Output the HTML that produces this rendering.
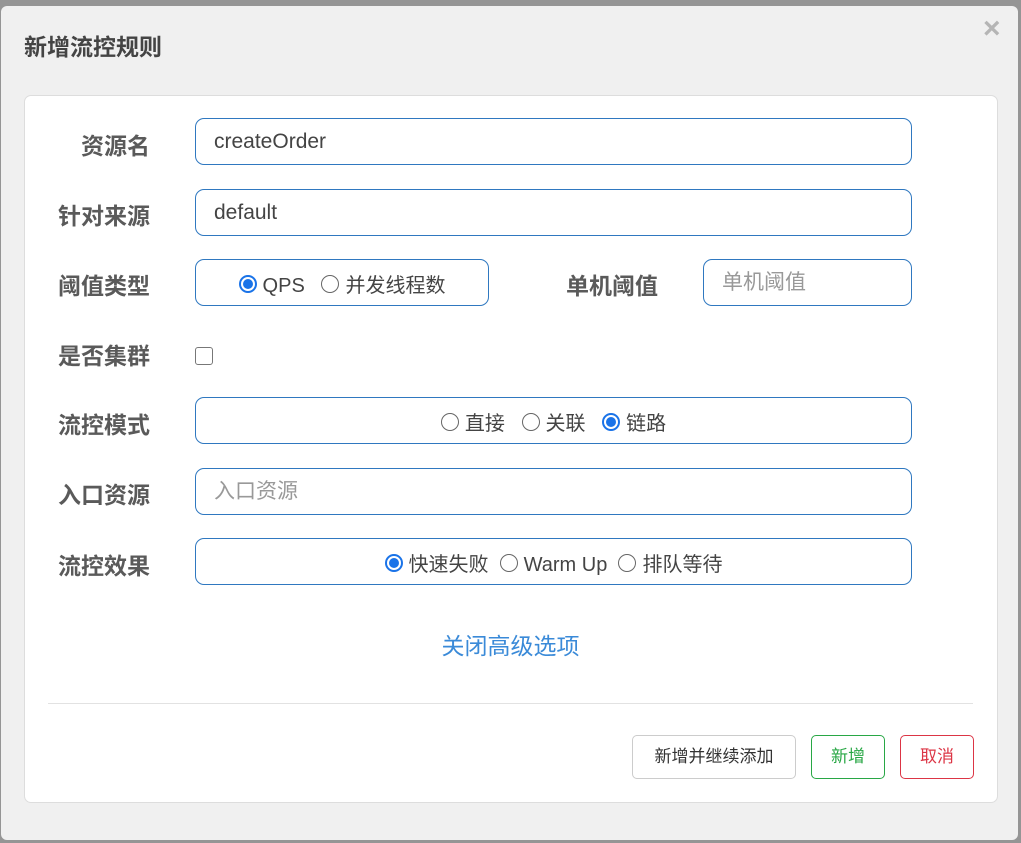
<!DOCTYPE html>
<html><head><meta charset="utf-8"><style>
*{box-sizing:border-box;margin:0;padding:0}
body{width:1021px;height:843px;background:#959595;position:relative;overflow:hidden;font-family:"Liberation Sans","Noto Sans CJK SC",sans-serif}
.dlg{position:absolute;left:1px;top:6px;width:1017px;height:834px;background:#f0f0f0;border-radius:6px}
.title{position:absolute;left:24px;top:28px;font-size:23px;font-weight:bold;color:#444}
.close{position:absolute;left:983px;top:14px;font-size:30px;font-weight:bold;color:#b5b5b5;line-height:30px}
.card{position:absolute;left:24px;top:95px;width:974px;height:708px;background:#fff;border:1px solid #ddd;border-radius:7px}
.lbl{position:absolute;font-size:23px;font-weight:bold;color:#5a5a5a;text-align:right;width:150px;left:0}
.box{position:absolute;border:1px solid #2f78c0;border-radius:9px;font-size:21px;color:#444;height:47px;line-height:45px;padding-left:18px}
.ph{color:#999}
.rad{display:inline-block;width:18px;height:18px;border:1.5px solid #666;border-radius:50%;vertical-align:-1px;margin-right:6px;position:relative}
.rad.on{border:2px solid #1a73e8}
.rad.on::after{content:"";position:absolute;left:2px;top:2px;width:10px;height:10px;border-radius:50%;background:#1a73e8}
.c{text-align:center;padding-left:0;line-height:52px;font-size:20px}
.btn{position:absolute;top:735px;height:44px;line-height:42px;border-radius:5px;font-size:17px;text-align:center;background:#fff}
</style></head><body>
<div class="dlg"></div>
<div class="title">新增流控规则</div>
<div class="close">×</div>
<div class="card"></div>

<div class="lbl" style="top:127px">资源名</div>
<div class="box" style="left:195px;top:118px;width:717px">createOrder</div>

<div class="lbl" style="top:197px">针对来源</div>
<div class="box" style="left:195px;top:189px;width:717px">default</div>

<div class="lbl" style="top:267px">阈值类型</div>
<div class="box c" style="left:195px;top:259px;width:294px"><span class="rad on"></span>QPS&nbsp;&nbsp; <span class="rad"></span>并发线程数</div>
<div class="lbl" style="top:267px;left:508px">单机阈值</div>
<div class="box ph" style="left:703px;top:259px;width:209px">单机阈值</div>

<div class="lbl" style="top:337px">是否集群</div>
<div style="position:absolute;left:195px;top:347px;width:18px;height:18px;border:1.5px solid #777;border-radius:3px"></div>

<div class="lbl" style="top:406px">流控模式</div>
<div class="box c" style="left:195px;top:397px;width:717px"><span class="rad"></span>直接&nbsp;&nbsp; <span class="rad"></span>关联&nbsp;&nbsp; <span class="rad on"></span>链路</div>

<div class="lbl" style="top:476px">入口资源</div>
<div class="box ph" style="left:195px;top:468px;width:717px">入口资源</div>

<div class="lbl" style="top:547px">流控效果</div>
<div class="box c" style="left:195px;top:538px;width:717px"><span class="rad on"></span>快速失败&nbsp; <span class="rad"></span>Warm Up&nbsp; <span class="rad"></span>排队等待</div>

<div style="position:absolute;left:0;width:1021px;top:627px;text-align:center;font-size:23px;color:#3a8ad8">关闭高级选项</div>
<div style="position:absolute;left:48px;top:703px;width:925px;height:1px;background:#e2e2e2"></div>

<div class="btn" style="left:632px;width:164px;border:1px solid #ccc;color:#333">新增并继续添加</div>
<div class="btn" style="left:811px;width:74px;border:1px solid #28a745;color:#28a745">新增</div>
<div class="btn" style="left:900px;width:74px;border:1px solid #dc3545;color:#dc3545">取消</div>
</body></html>
